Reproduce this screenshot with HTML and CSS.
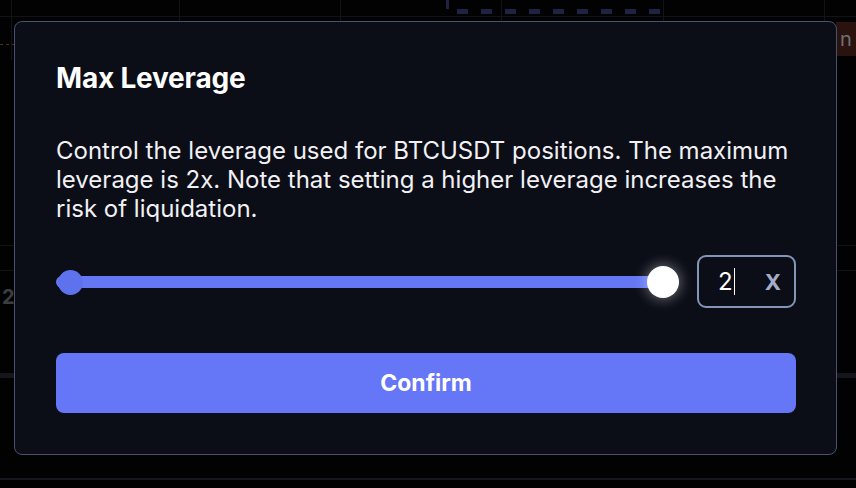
FILE: index.html
```html
<!DOCTYPE html>
<html lang="en">
<head>
  <meta charset="UTF-8" />
  <title>Max Leverage</title>
  <link rel="stylesheet" href="styles.css">
</head>
<body>
  <!-- chart behind the dialog -->
  <div class="chart">
    <div class="grid-v" style="left: 11px"></div>
    <div class="grid-v" style="left: 179px"></div>
    <div class="grid-v" style="left: 340px"></div>
    <div class="grid-v" style="left: 501px"></div>
    <div class="grid-v" style="left: 663px"></div>
    <div class="grid-v" style="left: 824px"></div>
    <div class="grid-h" style="top: 16px"></div>
    <div class="grid-h" style="top: 245px"></div>
    <div class="grid-h" style="top: 270px"></div>
    <div class="grid-h band" style="top: 373px"></div>
    <div class="grid-h bottom" style="top: 478px"></div>
    <div class="stick"></div>
    <div class="dash-line"></div>
    <div class="red-dash"></div>
    <div class="price-tag">n</div>
    <div class="axis-label">2</div>
  </div>

  <div class="overlay">
    <div class="modal">
      <h2 class="modal-title">Max Leverage</h2>
      <p class="modal-text">Control the leverage used for BTCUSDT positions. The maximum leverage is 2x. Note that setting a higher leverage increases the risk of liquidation.</p>

      <div class="leverage-row">
        <div class="slider">
          <div class="track"></div>
          <span class="dot"></span>
          <span class="knob"></span>
        </div>
        <div class="lev-input">
          <span class="value">2<span class="caret"></span></span>
          <span class="unit">X</span>
        </div>
      </div>

      <button class="confirm">Confirm</button>
    </div>
  </div>
</body>
</html>
```

FILE: styles.css
```css
* {
  margin: 0;
  padding: 0;
  box-sizing: border-box;
}

body {
  width: 856px;
  height: 488px;
  background: #020203;
  font-family: Inter, 'Noto Sans', sans-serif;
  color: #fff;
  position: relative;
  overflow: hidden;
}

/* background chart */
.chart {
  position: absolute;
  inset: 0;
}

.grid-v {
  position: absolute;
  top: 0;
  height: 60px;
  width: 1px;
  background: #121318;
}

.grid-h {
  position: absolute;
  left: 0;
  right: 0;
  height: 1px;
  background: #121318;
}

.grid-h.band {
  height: 5px;
  background: #15161b;
}

.grid-h.bottom {
  height: 2px;
  background: #15171f;
}

.stick {
  position: absolute;
  left: 446px;
  top: 0;
  width: 3px;
  height: 9px;
  background: #1e2343;
}

.dash-line {
  position: absolute;
  left: 457px;
  top: 9px;
  width: 206px;
  height: 5px;
  background: repeating-linear-gradient(90deg, #1e2343 0 11px, transparent 11px 24px);
}

.red-dash {
  position: absolute;
  left: 0;
  top: 44px;
  width: 14px;
  height: 1px;
  background: repeating-linear-gradient(90deg, #5a2a20 0 3px, transparent 3px 6px);
}

.price-tag {
  position: absolute;
  left: 836px;
  top: 22px;
  width: 22px;
  height: 34px;
  background: #2a120e;
  color: #6f6f74;
  font-size: 20px;
  line-height: 34px;
  padding-left: 4px;
}

.axis-label {
  position: absolute;
  left: 2px;
  top: 285px;
  color: #3c3d42;
  font-size: 20px;
  font-weight: 700;
}

/* dialog */
.overlay {
  position: relative;
  padding: 21px 19px 0 14px;
}

.modal {
  background: #0b0d17;
  border: 1.5px solid #46536f;
  border-radius: 8px;
  height: 434px;
  padding: 37px 40px 0 41px;
}

.modal-title {
  font-size: 28px;
  font-weight: 700;
  line-height: 38px;
  letter-spacing: -0.2px;
}

.modal-text {
  margin-top: 39px;
  font-size: 24px;
  line-height: 29px;
  color: #f1f1f4;
}

.leverage-row {
  display: flex;
  align-items: center;
  gap: 18px;
  margin-top: 32px;
}

.slider {
  flex: 1;
  position: relative;
  height: 34px;
  display: flex;
  align-items: center;
}

.track {
  width: 100%;
  height: 12px;
  border-radius: 6px;
  background: #6577f3;
}

.dot {
  position: absolute;
  left: 2px;
  top: 5px;
  width: 25px;
  height: 25px;
  border-radius: 50%;
  background: #5f72ee;
}

.knob {
  position: absolute;
  right: 0;
  top: 1px;
  width: 32px;
  height: 32px;
  border-radius: 50%;
  background: #fff;
  box-shadow: 0 0 12px 3px rgba(255, 255, 255, 0.3);
}

.lev-input {
  width: 99px;
  height: 53px;
  border: 2px solid #8595b8;
  border-radius: 9px;
  display: flex;
  align-items: center;
  justify-content: space-between;
  padding: 0 13px 0 19px;
}

.value {
  font-size: 24px;
  display: flex;
  align-items: center;
}

.caret {
  display: inline-block;
  width: 1.5px;
  height: 27px;
  background: #fff;
  margin-left: 1px;
}

.unit {
  font-size: 22px;
  font-weight: 700;
  color: #a3adc8;
}

.confirm {
  display: block;
  width: 100%;
  height: 60px;
  margin-top: 45px;
  border: none;
  border-radius: 8px;
  background: #6577f6;
  color: #fff;
  font-family: inherit;
  font-size: 23px;
  font-weight: 700;
}
```
